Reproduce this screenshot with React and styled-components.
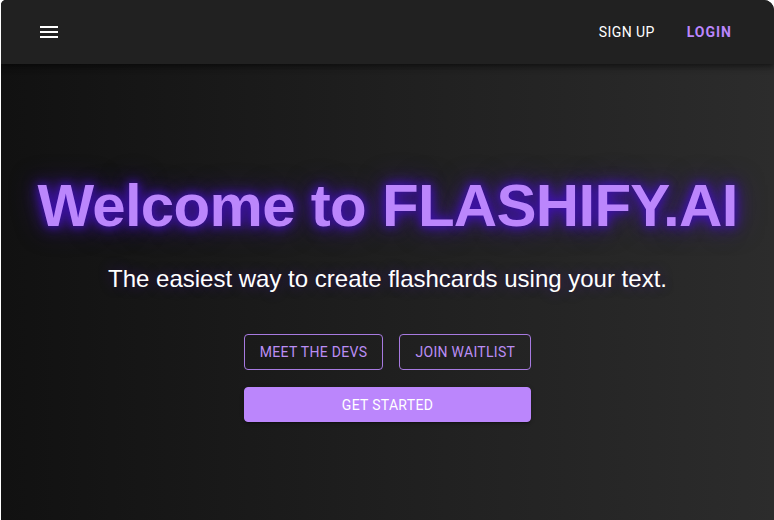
import React from "react";
import styled, { createGlobalStyle } from "styled-components";

const Global = createGlobalStyle`
  html, body { margin: 0; padding: 0; background: #ffffff; }
  body { padding-left: 1px; font-family: Roboto, "Liberation Sans", sans-serif; }
  #root { height: 520px; }
`;

const Page = styled.div`
  height: 520px;
  display: flex;
  flex-direction: column;
  border-radius: 5px 10px 0 0;
  overflow: hidden;
  background: linear-gradient(90deg, #111111 0%, #1f1f1f 50%, #2c2c2c 100%);
`;

const Bar = styled.header`
  position: relative;
  z-index: 1;
  height: 64px;
  flex: none;
  display: flex;
  align-items: center;
  padding: 0 34px 0 36px;
  background: #212121;
  box-shadow: 0 2px 4px -1px rgba(0,0,0,0.3), 0 4px 5px 0 rgba(0,0,0,0.2), 0 1px 10px 0 rgba(0,0,0,0.18);
`;

const MenuBtn = styled.button`
  background: none;
  border: 0;
  padding: 0;
  display: flex;
  color: #fff;
  cursor: pointer;
`;

const Spacer = styled.div`
  flex: 1;
`;

const NavLink = styled.button`
  background: none;
  border: 0;
  font-family: Roboto, sans-serif;
  font-size: 14px;
  letter-spacing: ${p => (p.$accent ? 1 : 0.4)}px;
  text-transform: uppercase;
  color: ${p => (p.$accent ? "#bb86fc" : "#ffffff")};
  font-weight: ${p => (p.$accent ? 700 : 400)};
  padding: 6px 8px;
  margin-left: ${p => p.$gap || 0}px;
  cursor: pointer;
`;

const Hero = styled.main`
  flex: 1;
  display: flex;
  flex-direction: column;
  align-items: center;
  padding-top: 106px;
`;

const Title = styled.h1`
  margin: 0;
  font-family: "Liberation Sans", Arial, sans-serif;
  font-weight: 700;
  font-size: 60px;
  line-height: 72px;
  letter-spacing: -0.7px;
  color: #bb86fc;
  text-shadow: 0 0 8px #3d10b0, 0 0 16px #4814c0, 0 0 28px rgba(80, 20, 200, 0.55);
`;

const Subtitle = styled.p`
  margin: 21px 0 0;
  font-family: "Liberation Sans", Arial, sans-serif;
  font-size: 24px;
  line-height: 32px;
  color: #ffffff;
  text-shadow: 0 0 14px rgba(98, 0, 234, 0.35);
`;

const Buttons = styled.div`
  margin-top: 39px;
  display: grid;
  grid-template-columns: auto auto;
  gap: 17px 16px;
`;

const Btn = styled.button`
  height: ${p => (p.$filled ? 35 : 36)}px;
  padding: 0 15px;
  border-radius: 4px;
  font-family: Roboto, sans-serif;
  font-size: 14px;
  font-weight: 400;
  letter-spacing: 0.3px;
  text-transform: uppercase;
  cursor: pointer;
  grid-column: ${p => (p.$filled ? "1 / -1" : "auto")};
  color: ${p => (p.$filled ? "#ffffff" : "#bb8ef5")};
  background: ${p => (p.$filled ? "#bb86fc" : "transparent")};
  border: 1px solid ${p => (p.$filled ? "#bb86fc" : "#a77ae0")};
  box-shadow: ${p => (p.$filled ? "0 3px 1px -2px rgba(0,0,0,0.2), 0 2px 2px 0 rgba(0,0,0,0.14), 0 1px 5px 0 rgba(0,0,0,0.12)" : "none")};
`;

export default function App() {
  return (
    <>
      <Global />
      <Page>
        <Bar>
          <MenuBtn aria-label="menu">
            <svg width="24" height="24" viewBox="0 0 24 24" fill="currentColor">
              <path d="M3 18h18v-2H3v2zm0-5h18v-2H3v2zm0-7v2h18V6H3z" />
            </svg>
          </MenuBtn>
          <Spacer />
          <NavLink>Sign Up</NavLink>
          <NavLink $accent $gap={16}>Login</NavLink>
        </Bar>
        <Hero>
          <Title>Welcome to FLASHIFY.AI</Title>
          <Subtitle>The easiest way to create flashcards using your text.</Subtitle>
          <Buttons>
            <Btn>Meet the Devs</Btn>
            <Btn>Join Waitlist</Btn>
            <Btn $filled>Get Started</Btn>
          </Buttons>
        </Hero>
      </Page>
    </>
  );
}
